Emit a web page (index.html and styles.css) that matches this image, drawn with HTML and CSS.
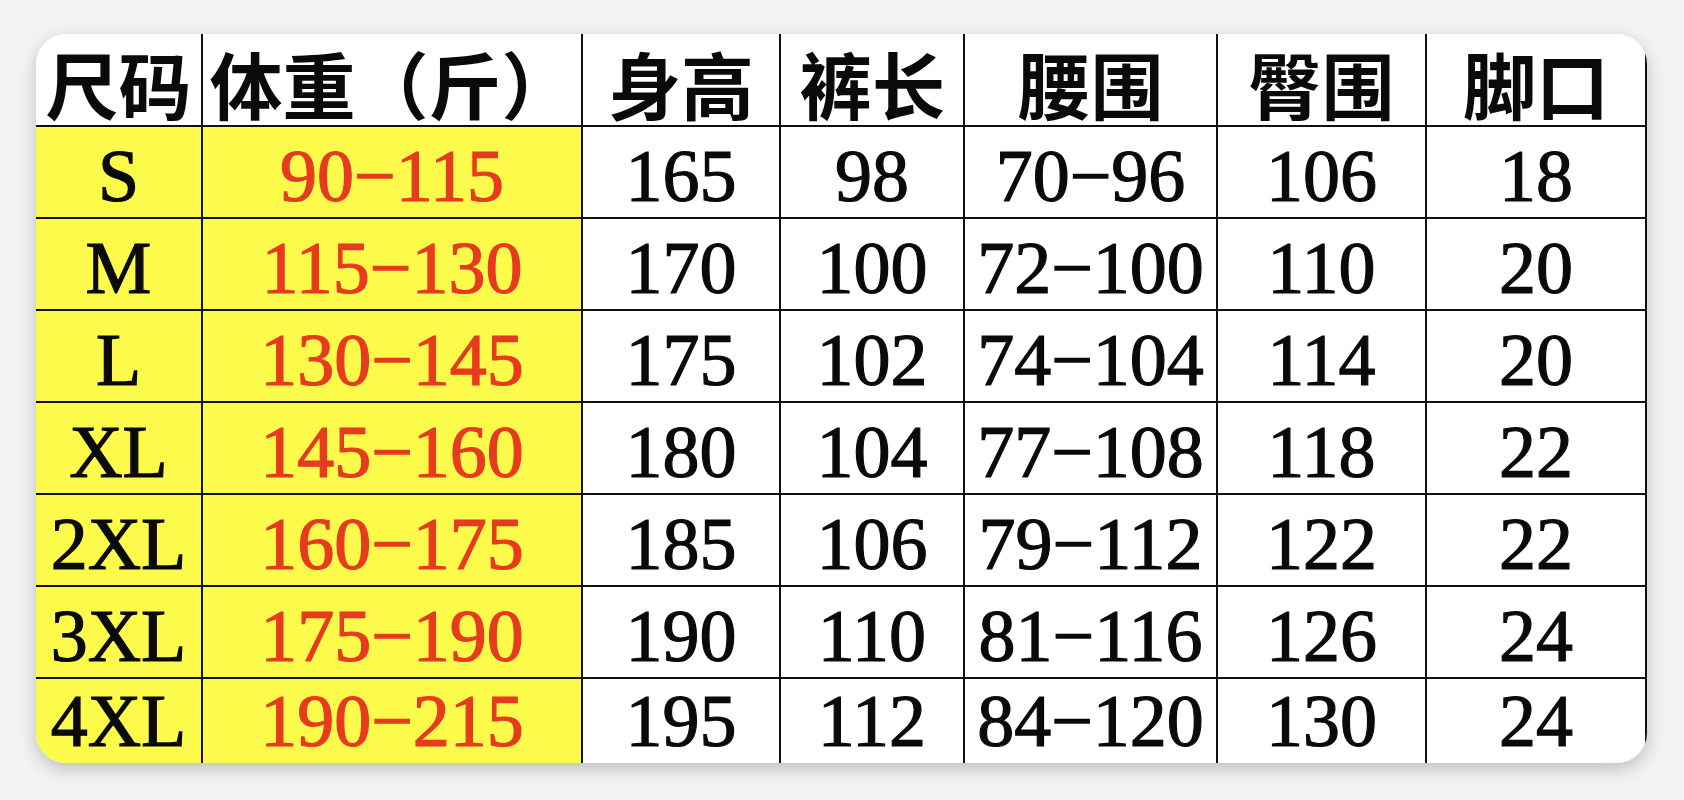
FILE: index.html
```html
<!DOCTYPE html>
<html lang="zh-CN">
<head>
<meta charset="utf-8">
<title>尺码表</title>
<link rel="stylesheet" href="styles.css">
</head>
<body>
<div class="card">
  <div class="grid">
    <div class="c h">尺码</div><div class="c h">体重（斤）</div><div class="c h">身高</div><div class="c h">裤长</div><div class="c h">腰围</div><div class="c h">臀围</div><div class="c h">脚口</div>

    <div class="c y">S</div><div class="c y r">90−115</div><div class="c">165</div><div class="c">98</div><div class="c">70−96</div><div class="c">106</div><div class="c">18</div>
    <div class="c y">M</div><div class="c y r">115−130</div><div class="c">170</div><div class="c">100</div><div class="c">72−100</div><div class="c">110</div><div class="c">20</div>
    <div class="c y">L</div><div class="c y r">130−145</div><div class="c">175</div><div class="c">102</div><div class="c">74−104</div><div class="c">114</div><div class="c">20</div>
    <div class="c y">XL</div><div class="c y r">145−160</div><div class="c">180</div><div class="c">104</div><div class="c">77−108</div><div class="c">118</div><div class="c">22</div>
    <div class="c y">2XL</div><div class="c y r">160−175</div><div class="c">185</div><div class="c">106</div><div class="c">79−112</div><div class="c">122</div><div class="c">22</div>
    <div class="c y">3XL</div><div class="c y r">175−190</div><div class="c">190</div><div class="c">110</div><div class="c">81−116</div><div class="c">126</div><div class="c">24</div>
    <div class="c y last">4XL</div><div class="c y r last">190−215</div><div class="c last">195</div><div class="c last">112</div><div class="c last">84−120</div><div class="c last">130</div><div class="c last">24</div>
  </div>
</div>
</body>
</html>
```

FILE: styles.css
```css
html, body {
  margin: 0;
  padding: 0;
}
body {
  width: 1684px;
  height: 800px;
  background: #f3f3f3;
  overflow: hidden;
  padding-top: 34px;
  padding-left: 36px;
  box-sizing: border-box;
}
.card {
  width: 1611px;
  height: 729px;
  border-radius: 30px;
  background: #fff;
  box-shadow: 0 6px 18px rgba(0, 0, 0, 0.22);
}
.grid {
  display: grid;
  grid-template-columns: 167px 380px 198px 184px 253px 209px 220px;
  grid-template-rows: 93px repeat(6, 92px) 84px;
  clip-path: inset(0 round 30px);
}
.c {
  box-sizing: border-box;
  border-right: 2px solid #111;
  border-bottom: 2px solid #111;
  display: flex;
  align-items: center;
  justify-content: center;
  font-family: "Liberation Serif", "Noto Sans CJK SC", serif;
  font-size: 74px;
  line-height: 1;
  color: #0a0a0a;
  padding-top: 8px;
  white-space: nowrap;
  -webkit-text-stroke: 1.2px currentColor;
}
.c.last {
  border-bottom: none;
  padding-top: 0;
}
.h {
  font-family: "Noto Sans CJK SC", sans-serif;
  font-size: 73px;
  font-weight: 600;
  padding-top: 6px;
  -webkit-text-stroke: 0;
}
.y {
  background: #fcfa4a;
}
.r {
  color: #e63b1f;
}
```
